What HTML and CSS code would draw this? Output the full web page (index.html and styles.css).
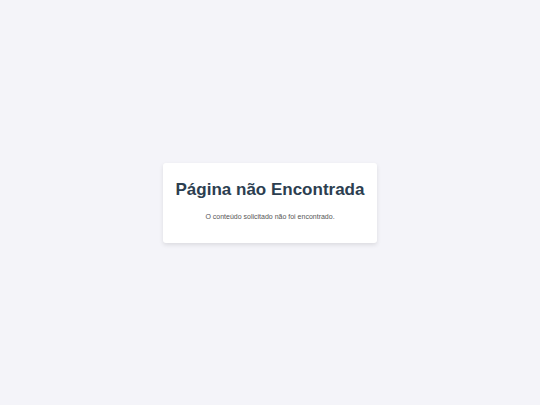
FILE: index.html
```html
<!DOCTYPE html>
<html lang="pt-BR">

<head>
    <meta charset="UTF-8">
    <meta name="viewport" content="width=device-width, initial-scale=1.0">
    <title>Página não Encontrada</title>
    <link rel="stylesheet" href="styles.css">
</head>

<body>
    <main class="container">
        <h1 class="title">Página não Encontrada</h1>
        <p class="message">O conteúdo solicitado não foi encontrado.</p>
    </main>
</body>

</html>
```
FILE: styles.css
```css
body {
    display: flex;
    justify-content: center;
    align-items: center;
    min-height: 100vh;
    margin: 0;
    background-color: #f4f4f9;
    font-family: "Liberation Sans", Arial, sans-serif;
    color: #333;
}

.container {
    padding: 13px;
    border-radius: 3px;
    background-color: #fff;
    box-shadow: 0 2px 4px rgba(0, 0, 0, 0.1);
    text-align: center;
}

.title {
    margin: 4px 0 12px;
    font-size: 17px;
    line-height: 20px;
    color: #2c3e50;
}

.message {
    margin: 0 0 8px;
    font-size: 7px;
    line-height: 10px;
    color: #555;
}
```
